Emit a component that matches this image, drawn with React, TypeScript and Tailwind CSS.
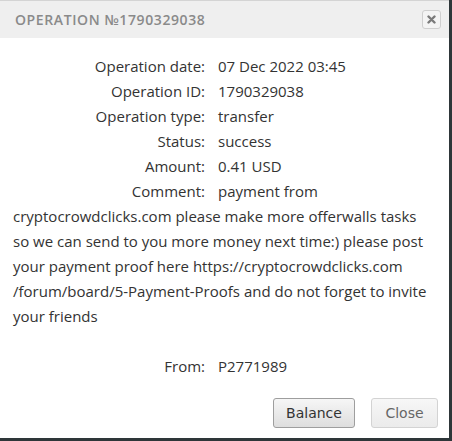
const rows: [string, string][] = [
  ['Operation date:', '07 Dec 2022 03:45'],
  ['Operation ID:', '1790329038'],
  ['Operation type:', 'transfer'],
  ['Status:', 'success'],
  ['Amount:', '0.41 USD'],
  [
    'Comment:',
    'payment from cryptocrowdclicks.com please make more offerwalls tasks so we can send to you more money next time:) please post your payment proof here https://cryptocrowdclicks.com /forum/board/5-Payment-Proofs and do not forget to invite your friends',
  ],
]

function Row({ label, value }: { label: string; value: string }) {
  return (
    <div className="leading-[25px]">
      <span className="inline-block w-[192px] text-right mr-[13px]">{label}</span>
      {value}
    </div>
  )
}

export default function App() {
  return (
    <div className="w-[452px] h-[441px] bg-[#2e3639] overflow-hidden">
      <div className="w-[449px] h-[438px] bg-white flex flex-col">
        {/* header */}
        <div className="h-[38px] bg-[#efefef] border-t border-[#d4d4d4] flex items-center justify-between pl-[15px] pr-[8px]">
          <span className="text-[14px] tracking-[0.6px] text-[#8a8a8a] font-semibold" style={{ fontFamily: '"Open Sans", sans-serif' }}>
            OPERATION №1790329038
          </span>
          <button className="w-[19px] h-[19px] border border-[#cfcfcf] rounded-[3px] bg-[#f4f4f4] flex items-center justify-center">
            <svg width="9" height="9" viewBox="0 0 9 9">
              <path d="M1.5 1.5 L7.5 7.5 M7.5 1.5 L1.5 7.5" stroke="#7a7a7a" strokeWidth="2.4" strokeLinecap="round" />
            </svg>
          </button>
        </div>

        {/* body */}
        <div className="flex-1 pt-[16px] px-[13px] text-[15px] text-[#333]" style={{ fontFamily: '"Open Sans", sans-serif' }}>
          {rows.map(([l, v]) => (
            <Row key={l} label={l} value={v} />
          ))}
          <div className="h-[25px]" />
          <Row label="From:" value="P2771989" />
        </div>

        {/* footer */}
        <div className="flex justify-end gap-[16px] pr-[11px] pb-[10px] text-[14px]" style={{ fontFamily: '"DejaVu Sans", sans-serif' }}>
          <button className="w-[82px] h-[30px] rounded-[3px] border border-[#9e9e9e] bg-gradient-to-b from-[#f6f6f6] to-[#dedede] text-[#333]">
            Balance
          </button>
          <button className="w-[67px] h-[30px] rounded-[3px] border border-[#d3d3d3] bg-gradient-to-b from-[#f7f7f7] to-[#ebebeb] text-[#666]">
            Close
          </button>
        </div>
      </div>
    </div>
  )
}
